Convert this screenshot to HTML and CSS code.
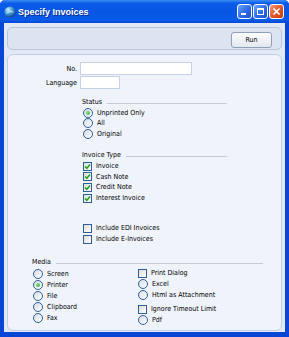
FILE: index.html
```html
<!DOCTYPE html>
<html lang="en">
<head>
  <meta charset="UTF-8" />
  <title>Specify Invoices</title>
  <link rel="stylesheet" href="styles.css">
</head>
<body>
  <div class="window">
    <div class="titlebar">
      <svg class="app-icon" width="12" height="12" viewBox="0 0 12 12">
        <defs>
          <radialGradient id="globe" cx="35%" cy="30%" r="75%">
            <stop offset="0" stop-color="#d8f1ff"/>
            <stop offset="0.45" stop-color="#4aa3dc"/>
            <stop offset="1" stop-color="#0b3d86"/>
          </radialGradient>
        </defs>
        <circle cx="6" cy="6" r="5.6" fill="url(#globe)"/>
        <path d="M2.5 7.5 C4 5.5 7 5 9.5 6.2" stroke="#e6f6ff" stroke-width="1" fill="none" opacity="0.8"/>
      </svg>
      <span class="title">Specify Invoices</span>
      <div class="controls">
        <span class="ctl">
          <svg width="13" height="13" viewBox="0 0 13 13"><rect x="3" y="8" width="5" height="2" fill="#fff"/></svg>
        </span>
        <span class="ctl">
          <svg width="13" height="13" viewBox="0 0 13 13"><rect x="3.5" y="3.5" width="6" height="6" fill="none" stroke="#fff"/><rect x="3" y="3" width="7" height="2" fill="#fff"/></svg>
        </span>
        <span class="ctl close">
          <svg width="13" height="13" viewBox="0 0 13 13"><path d="M3.5 3.5 L9.5 9.5 M9.5 3.5 L3.5 9.5" stroke="#fff" stroke-width="1.7"/></svg>
        </span>
      </div>
    </div>

    <div class="frame">
      <div class="client">
        <div class="toolbar">
          <button class="run-btn">Run</button>
        </div>

        <div class="panel">
          <div class="fields">
            <label>No.</label>
            <input class="in-no" type="text">
            <label>Language</label>
            <input class="in-lang" type="text">
          </div>

          <div class="group status">
            <div class="group-head">Status</div>
            <div class="opt"><span class="radio on"></span>Unprinted Only</div>
            <div class="opt"><span class="radio"></span>All</div>
            <div class="opt"><span class="radio"></span>Original</div>
          </div>

          <div class="group types">
            <div class="group-head">Invoice Type</div>
            <div class="opt"><span class="check"><svg width="7" height="7" viewBox="0 0 7 7"><path d="M1 3.4 L2.8 5.3 L6 1.5" stroke="#21a121" stroke-width="1.5" fill="none"/></svg></span>Invoice</div>
            <div class="opt"><span class="check"><svg width="7" height="7" viewBox="0 0 7 7"><path d="M1 3.4 L2.8 5.3 L6 1.5" stroke="#21a121" stroke-width="1.5" fill="none"/></svg></span>Cash Note</div>
            <div class="opt"><span class="check"><svg width="7" height="7" viewBox="0 0 7 7"><path d="M1 3.4 L2.8 5.3 L6 1.5" stroke="#21a121" stroke-width="1.5" fill="none"/></svg></span>Credit Note</div>
            <div class="opt"><span class="check"><svg width="7" height="7" viewBox="0 0 7 7"><path d="M1 3.4 L2.8 5.3 L6 1.5" stroke="#21a121" stroke-width="1.5" fill="none"/></svg></span>Interest Invoice</div>
          </div>

          <div class="group extra">
            <div class="opt"><span class="check"></span>Include EDI Invoices</div>
            <div class="opt"><span class="check"></span>Include E-Invoices</div>
          </div>

          <div class="group media">
            <div class="group-head">Media</div>
            <div class="media-cols">
              <div class="col">
                <div class="opt"><span class="radio"></span>Screen</div>
                <div class="opt"><span class="radio on"></span>Printer</div>
                <div class="opt"><span class="radio"></span>File</div>
                <div class="opt"><span class="radio"></span>Clipboard</div>
                <div class="opt"><span class="radio"></span>Fax</div>
              </div>
              <div class="col right">
                <div class="opt"><span class="check"></span>Print Dialog</div>
                <div class="opt"><span class="radio"></span>Excel</div>
                <div class="opt"><span class="radio"></span>Html as Attachment</div>
                <div class="opt spaced"><span class="check"></span>Ignore Timeout Limit</div>
                <div class="opt"><span class="radio"></span>Pdf</div>
              </div>
            </div>
          </div>
        </div>
      </div>
    </div>
  </div>
</body>
</html>
```

FILE: styles.css
```css
* {
  box-sizing: border-box;
}

body {
  margin: 0;
  background: #fff;
  font-family: "DejaVu Sans Condensed", "DejaVu Sans", sans-serif;
  font-stretch: condensed;
  font-size: 7px;
  color: #000;
}

.window {
  width: 289px;
  height: 337px;
  display: flex;
  flex-direction: column;
  background: #0a46d6;
  border-radius: 5px 5px 0 0;
  overflow: hidden;
}

/* title bar */
.titlebar {
  height: 23px;
  flex: none;
  display: flex;
  align-items: center;
  padding: 0 5px 0 4px;
  background: linear-gradient(to bottom, #3d8ff7 0%, #0b5ce9 14%, #0856e4 50%, #095be8 85%, #0649d6 100%);
}

.app-icon {
  margin-right: 2px;
}

.title {
  flex: 1;
  color: #fff;
  font-family: "Liberation Sans", sans-serif;
  font-stretch: normal;
  font-size: 9px;
  font-weight: 700;
  text-shadow: 1px 1px 0 #0c2a8e;
}

.controls {
  display: flex;
  gap: 1px;
}

.ctl {
  width: 15px;
  height: 15px;
  border: 1px solid #fff;
  border-radius: 3px;
  background: linear-gradient(135deg, #6aa6fa 0%, #2f6be6 55%, #1d50d2 100%);
  display: flex;
}

.ctl.close {
  background: linear-gradient(135deg, #f19c7c 0%, #e1582d 50%, #c43b13 100%);
}

/* window body */
.frame {
  flex: 1;
  display: flex;
  padding: 0 4px 5px;
}

.client {
  flex: 1;
  display: flex;
  flex-direction: column;
  background: #e3e9f4;
  padding: 4px 3px 1px;
}

.toolbar {
  height: 23px;
  flex: none;
  display: flex;
  justify-content: flex-end;
  padding: 4px 9px 0 0;
  border: 1px solid #b9c7dc;
  border-radius: 5px;
  background: #dce4f0;
}

.run-btn {
  width: 41px;
  height: 16px;
  padding: 0;
  border: 1px solid #8e9fb8;
  border-radius: 3px;
  background: linear-gradient(#fdfdfe, #e3e8f0);
  font: inherit;
  color: #000;
}

.panel {
  flex: 1;
  margin-top: 4px;
  padding-top: 7px;
  border: 1px solid #c2cfe2;
  border-radius: 6px;
  background: repeating-linear-gradient(#eef2fa 0 1px, #f1f4fb 1px 2px);
}

/* text fields */
.fields {
  display: grid;
  grid-template-columns: 69px auto;
  justify-content: start;
  align-items: center;
  column-gap: 3px;
  row-gap: 1px;
}

.fields label {
  text-align: right;
}

.fields input {
  height: 13px;
  padding: 0;
  border: 1px solid #c6d2e3;
  background: #fff;
  font: inherit;
}

.in-no {
  width: 112px;
}

.in-lang {
  width: 40px;
}

/* option groups */
.group {
  margin-left: 74px;
  width: 145px;
}

.group-head {
  display: flex;
  align-items: center;
  gap: 5px;
  height: 11px;
  white-space: nowrap;
}

.group-head::after {
  content: "";
  flex: 1;
  height: 1px;
  margin-top: 3px;
  background: #c4cbd8;
}

.opt {
  display: flex;
  align-items: center;
  gap: 4px;
  height: 10.6px;
  padding-left: 1px;
  white-space: nowrap;
}

.status {
  margin-top: 7.5px;
}

.types {
  margin-top: 10.7px;
}

.extra {
  margin-top: 19.8px;
}

.media {
  margin-left: 24px;
  margin-top: 12.6px;
  width: 231px;
}

.media-cols {
  display: grid;
  grid-template-columns: 105px 1fr;
}

.media .opt {
  height: 11.2px;
}

.media .right .opt {
  height: 11px;
}

.media .right .spaced {
  margin-top: 3px;
}

.radio {
  flex: none;
  width: 10px;
  height: 10px;
  border: 1px solid #2f5f96;
  border-radius: 50%;
  background: linear-gradient(135deg, #d6dbe4, #fff);
  display: flex;
  align-items: center;
  justify-content: center;
}

.radio.on::after {
  content: "";
  width: 4px;
  height: 4px;
  border-radius: 50%;
  background: radial-gradient(circle at 35% 35%, #8be68b, #1f9a1f);
}

.check {
  flex: none;
  width: 9px;
  height: 9px;
  border: 1px solid #2f5f96;
  background: linear-gradient(135deg, #dcdcd6, #fff);
  display: flex;
}
```
